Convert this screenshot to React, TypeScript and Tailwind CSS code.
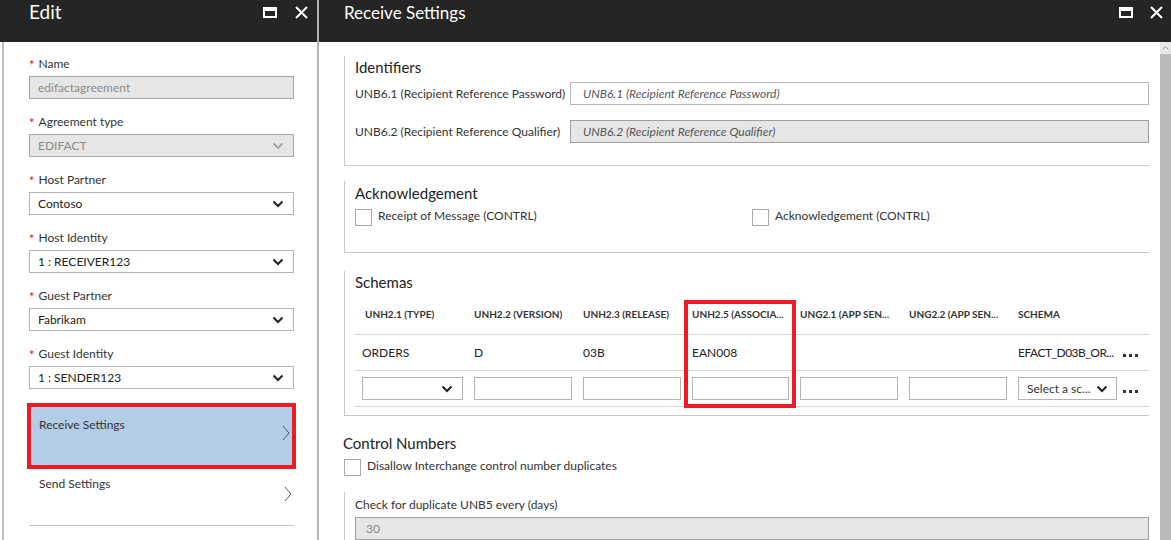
const font = { fontFamily: "Lato, 'Noto Sans', sans-serif" };

const Chevron = ({ muted }: { muted?: boolean }) => (
  <svg width="12" height="8" viewBox="0 0 12 8" className="shrink-0">
    <path d="M1.5 1.5l4.5 4.5 4.5-4.5" fill="none" stroke={muted ? "#a8a8a8" : "#222"} strokeWidth="2" />
  </svg>
);

const RightArrow = () => (
  <svg width="8" height="16" viewBox="0 0 8 16">
    <path d="M1 1l6 7-6 7" fill="none" stroke="#555" strokeWidth="1" />
  </svg>
);

const MaxIcon = () => <div className="w-[14px] h-[11px] border-2 border-t-[4px] border-white" />;

const CloseIcon = () => (
  <svg width="13" height="13" viewBox="0 0 13 13">
    <path d="M1 1l11 11M12 1L1 12" stroke="#fff" strokeWidth="2" />
  </svg>
);

const Field = ({ label, value, disabled, select }: { label: string; value: string; disabled?: boolean; select?: boolean }) => (
  <div className="mb-[15px]">
    <div className="h-[16px] mb-[4px] flex items-center text-[12px] text-[#333]">
      <span className="text-[#e81123] mr-[4px] text-[13px] leading-none relative top-[1px]">*</span>
      {label}
    </div>
    <div
      className={
        "h-[23px] flex items-center justify-between pl-[8px] pr-[9px] border text-[12px] " +
        (disabled ? "bg-[#e6e6e6] border-[#a6a6a6] text-[#8a8a8a]" : "bg-white border-[#b3b3b3] text-[#222]")
      }
    >
      <span>{value}</span>
      {select && <Chevron muted={disabled} />}
    </div>
  </div>
);

const Checkbox = () => <div className="w-[17px] h-[17px] border border-[#a8a8a8] bg-white shrink-0" />;

const Dots = () => (
  <div className="flex gap-[3px] items-center h-full pl-[5px] pt-[5px]">
    <span className="w-[3px] h-[3px] bg-[#333]" />
    <span className="w-[3px] h-[3px] bg-[#333]" />
    <span className="w-[3px] h-[3px] bg-[#333]" />
  </div>
);

const Box = () => <div className="h-[23px] border border-[#b3b3b3] bg-white" />;

const headers = ["UNH2.1 (TYPE)", "UNH2.2 (VERSION)", "UNH2.3 (RELEASE)", "UNH2.5 (ASSOCIA...", "UNG2.1 (APP SEN...", "UNG2.2 (APP SEN...", "SCHEMA"];
const values = ["ORDERS", "D", "03B", "EAN008", "", "", "EFACT_D03B_OR..."];
const cols = "grid grid-cols-[109px_109px_109px_108px_109px_109px_110px_1fr]";

export default function App() {
  return (
    <div className="w-[1171px] h-[540px] overflow-hidden flex bg-white" style={font}>
      {/* edit blade */}
      <div className="w-[319px] shrink-0 flex flex-col border-r-2 border-[#b4b4b4]">
        <div className="h-[42px] shrink-0 bg-[#252525] flex items-start pl-[29px] pr-[9px] text-white">
          <span className="text-[19px] leading-[24px] flex-1">Edit</span>
          <div className="flex items-center gap-[18px] pt-[6px]">
            <MaxIcon />
            <CloseIcon />
          </div>
        </div>
        <div className="flex-1 min-h-0 overflow-hidden ml-[2px] border-l-2 border-[#bdbdbd] pl-[25px] pr-[23px] pt-[14px]">
          <Field label="Name" value="edifactagreement" disabled />
          <Field label="Agreement type" value="EDIFACT" disabled select />
          <Field label="Host Partner" value="Contoso" select />
          <Field label="Host Identity" value="1 : RECEIVER123" select />
          <Field label="Guest Partner" value="Fabrikam" select />
          <Field label="Guest Identity" value="1 : SENDER123" select />
          <div className="-mx-[2px] -mt-[1px] h-[66px] border-4 border-[#ed1c24] bg-[#b3cde6] flex justify-between pl-[8px] pr-[2px] pt-[9px] text-[12px] text-[#333]">
            <span>Receive Settings</span>
            <div className="pt-[9px]"><RightArrow /></div>
          </div>
          <div className="h-[57px] flex justify-between pl-[10px] pr-[2px] pt-[6px] text-[12px] text-[#333] border-b border-[#c4c4c4]">
            <span>Send Settings</span>
            <div className="pt-[11px]"><RightArrow /></div>
          </div>
        </div>
      </div>

      {/* receive settings blade */}
      <div className="flex-1 flex flex-col min-w-0">
        <div className="h-[42px] shrink-0 bg-[#252525] flex items-start pl-[25px] pr-[8px] text-white">
          <span className="text-[17px] leading-[26px] flex-1">Receive Settings</span>
          <div className="flex items-center gap-[17px] pt-[6px]">
            <MaxIcon />
            <CloseIcon />
          </div>
        </div>
        <div className="flex-1 min-h-0 overflow-hidden flex">
          <div className="flex-1 pl-[25px] pr-[11px] pt-[14px] text-[12px] text-[#333]">
            {/* identifiers */}
            <div className="border-l border-b border-[#c8c8c8] pl-[10px] h-[110px]">
              <div className="text-[15px] text-[#222] leading-[20px] pt-[1px]">Identifiers</div>
              <div className="flex items-center mt-[5px]">
                <span className="w-[215px] shrink-0">UNB6.1 (Recipient Reference Password)</span>
                <div className="flex-1 h-[23px] border border-[#b8b8b8] flex items-center pl-[12px] italic text-[#555]">
                  UNB6.1 (Recipient Reference Password)
                </div>
              </div>
              <div className="flex items-center mt-[15px]">
                <span className="w-[215px] shrink-0">UNB6.2 (Recipient Reference Qualifier)</span>
                <div className="flex-1 h-[23px] border border-[#9e9e9e] bg-[#e6e6e6] flex items-center pl-[12px] italic text-[#555]">
                  UNB6.2 (Recipient Reference Qualifier)
                </div>
              </div>
            </div>

            {/* acknowledgement */}
            <div className="mt-[15px] border-l border-b border-[#c8c8c8] pl-[10px] h-[72px]">
              <div className="text-[15px] text-[#222] leading-[20px] pt-[2px]">Acknowledgement</div>
              <div className="flex mt-[6px]">
                <div className="w-[397px] flex items-start gap-[6px]">
                  <Checkbox />
                  <span className="leading-[14px]">Receipt of Message (CONTRL)</span>
                </div>
                <div className="flex items-start gap-[6px]">
                  <Checkbox />
                  <span className="leading-[14px]">Acknowledgement (CONTRL)</span>
                </div>
              </div>
            </div>

            {/* schemas */}
            <div className="mt-[18px] border-l border-b border-[#c8c8c8] pl-[10px] h-[145px]">
              <div className="text-[15px] text-[#222] leading-[20px] pt-[1px]">Schemas</div>
              <div className="relative mt-[3px]">
                <div className={cols + " h-[40px] items-center border-b border-[#d4d4d4] text-[10px] font-bold text-[#333]"}>
                  {headers.map((h) => (
                    <div key={h} className="pl-[10px]">{h}</div>
                  ))}
                  <div />
                </div>
                <div className={cols + " h-[36px] items-center border-b border-[#d4d4d4] text-[12px] text-[#222]"}>
                  {values.map((v, i) => (
                    <div key={i} className={i === 0 ? "pl-[7px]" : i === 6 ? "pl-[10px] tracking-[-0.5px] whitespace-nowrap" : "pl-[10px]"}>{v}</div>
                  ))}
                  <Dots />
                </div>
                <div className={cols + " h-[36px] items-center border-b border-[#d4d4d4] text-[12px]"}>
                  <div className="pl-[7px] pr-[1px]">
                    <div className="h-[23px] border border-[#b3b3b3] flex items-center justify-end pr-[9px]"><Chevron /></div>
                  </div>
                  {[0, 1, 2, 3, 4].map((k) => (
                    <div key={k} className="pl-[10px] pr-[1px]"><Box /></div>
                  ))}
                  <div className="pl-[10px] pr-[1px]">
                    <div className="h-[23px] border border-[#b3b3b3] flex items-center justify-between pl-[8px] pr-[8px] text-[#333]">
                      <span>Select a sc...</span>
                      <Chevron />
                    </div>
                  </div>
                  <Dots />
                </div>
                <div className="absolute left-[329px] top-[5px] w-[112px] h-[108px] border-4 border-[#ed1c24]" />
              </div>
            </div>

            {/* control numbers */}
            <div className="mt-[17px]">
              <div className="text-[15px] text-[#222] leading-[20px] -ml-[1px]">Control Numbers</div>
              <div className="flex items-start gap-[6px] mt-[6px]">
                <Checkbox />
                <span className="leading-[14px]">Disallow Interchange control number duplicates</span>
              </div>
              <div className="mt-[16px] border-l border-[#c8c8c8] pl-[10px] pt-[6px] h-[60px]">
                <div className="leading-[14px]">Check for duplicate UNB5 every (days)</div>
                <div className="mt-[5px] h-[23px] border border-[#9e9e9e] bg-[#e6e6e6] flex items-center pl-[10px] text-[#8a8a8a]">30</div>
              </div>
            </div>
          </div>

          {/* scrollbar */}
          <div className="w-[11px] shrink-0 flex flex-col">
            <div className="h-[12px] bg-[#e8e8e8] flex items-center justify-center">
              <svg width="7" height="4" viewBox="0 0 7 4">
                <path d="M0.5 3.5l3-3 3 3" fill="none" stroke="#a0a0a0" strokeWidth="1" />
              </svg>
            </div>
            <div className="flex-1 bg-[#bababa]" />
          </div>
        </div>
      </div>
    </div>
  );
}
